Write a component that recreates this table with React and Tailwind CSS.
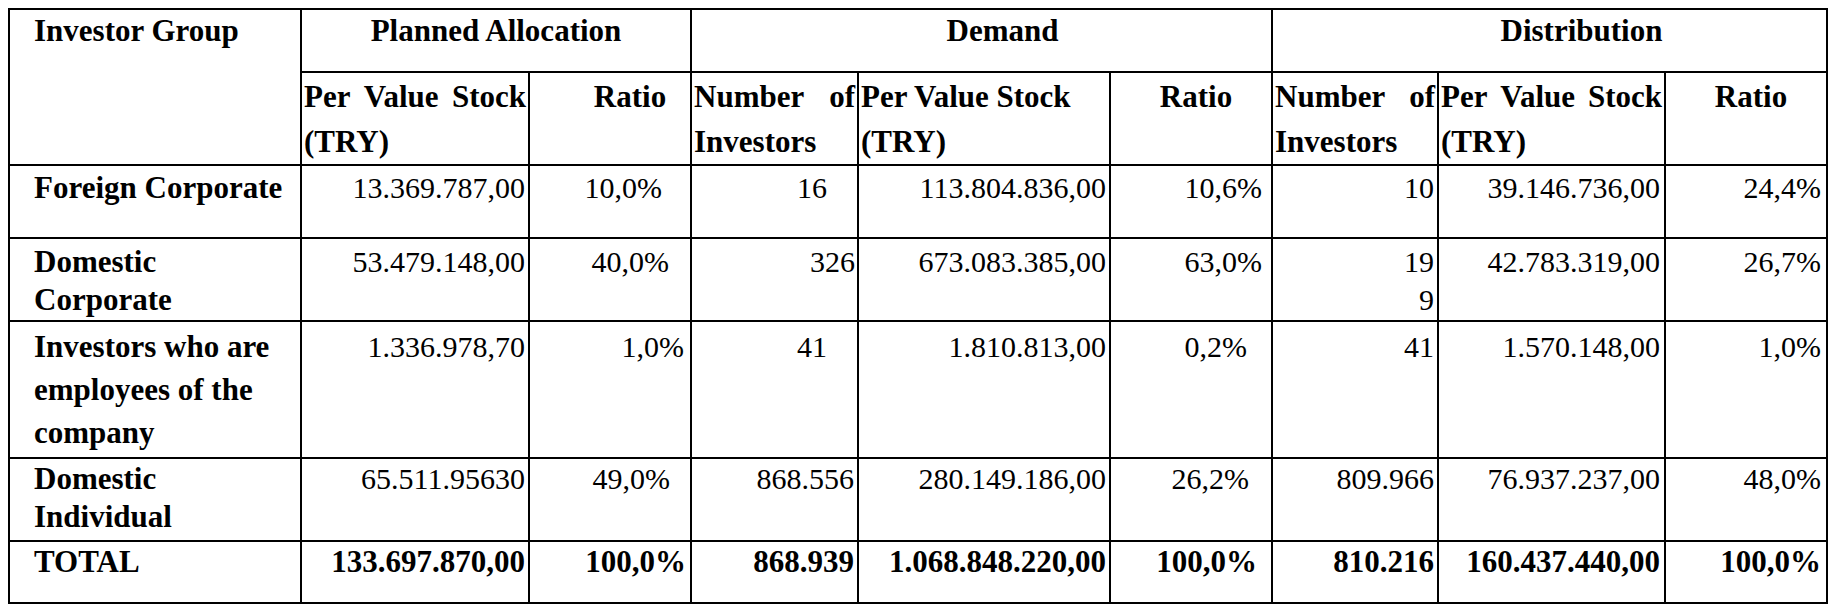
import React from "react";

const rows = [
  {
    h: "h-[73px]",
    lh: "leading-[38px] pt-[3px]",
    label: ["Foreign Corporate"],
    cells: [
      ["13.369.787,00", "pr-[3px]"],
      ["10,0%", "pr-[28px]"],
      ["16", "pr-[30px]"],
      ["113.804.836,00", "pr-[3px]"],
      ["10,6%", "pr-[9px]"],
      ["10", "pr-[3px]"],
      ["39.146.736,00", "pr-[4px]"],
      ["24,4%", "pr-[5px]"],
    ],
  },
  {
    h: "h-[83px]",
    lh: "leading-[38px] pt-[4px]",
    label: ["Domestic", "Corporate"],
    cells: [
      ["53.479.148,00", "pr-[3px]"],
      ["40,0%", "pr-[21px]"],
      ["326", "pr-[2px]"],
      ["673.083.385,00", "pr-[3px]"],
      ["63,0%", "pr-[9px]"],
      [["19", "9"], "pr-[3px]"],
      ["42.783.319,00", "pr-[4px]"],
      ["26,7%", "pr-[5px]"],
    ],
  },
  {
    h: "h-[137px]",
    lh: "leading-[43px] pt-[3px]",
    label: ["Investors who are", "employees of the", "company"],
    cells: [
      ["1.336.978,70", "pr-[3px]"],
      ["1,0%", "pr-[6px]"],
      ["41", "pr-[30px]"],
      ["1.810.813,00", "pr-[3px]"],
      ["0,2%", "pr-[24px]"],
      ["41", "pr-[3px]"],
      ["1.570.148,00", "pr-[4px]"],
      ["1,0%", "pr-[5px]"],
    ],
  },
  {
    h: "h-[83px]",
    lh: "leading-[38px] pt-[1px]",
    label: ["Domestic", "Individual"],
    cells: [
      ["65.511.95630", "pr-[3px]"],
      ["49,0%", "pr-[20px]"],
      ["868.556", "pr-[3px]"],
      ["280.149.186,00", "pr-[3px]"],
      ["26,2%", "pr-[22px]"],
      ["809.966", "pr-[3px]"],
      ["76.937.237,00", "pr-[4px]"],
      ["48,0%", "pr-[5px]"],
    ],
  },
];

const total = {
  h: "h-[62px]",
  lh: "leading-[38px] pt-[1px]",
  label: ["TOTAL"],
  cells: [
    ["133.697.870,00", "pr-[3px]"],
    ["100,0%", "pr-[4px]"],
    ["868.939", "pr-[3px]"],
    ["1.068.848.220,00", "pr-[3px]"],
    ["100,0%", "pr-[14px]"],
    ["810.216", "pr-[3px]"],
    ["160.437.440,00", "pr-[4px]"],
    ["100,0%", "pr-[5px]"],
  ],
};

function Lines({ lines }) {
  const arr = Array.isArray(lines) ? lines : [lines];
  return arr.map((l, i) => (
    <div key={i} className="whitespace-nowrap">
      {l}
    </div>
  ));
}

function Justified({ words }) {
  return (
    <div className="flex justify-between whitespace-nowrap">
      {words.map((w, i) => (
        <span key={i}>{w}</span>
      ))}
    </div>
  );
}

function BodyRow({ row, bold }) {
  return (
    <tr className={row.h}>
      <td
        className={`border-2 border-black align-top pl-[24px] pr-[10px] font-bold text-[31px] ${row.lh}`}
      >
        <Lines lines={row.label} />
      </td>
      {row.cells.map(([v, pr], i) => (
        <td
          key={i}
          className={`border-2 border-black align-top text-right pl-[2px] ${pr} ${row.lh} ${
            bold ? "font-bold text-[31px]" : "font-normal text-[30px]"
          }`}
        >
          <Lines lines={v} />
        </td>
      ))}
    </tr>
  );
}

const th = "border-2 border-black align-top font-bold text-[31px]";

export default function App() {
  return (
    <div className="w-[1836px] h-[616px] bg-white pt-[8px] pl-[8px] [font-family:'Liberation_Serif',serif] text-black text-[30px] leading-[41px]">
      <table className="border-collapse table-fixed w-[1820px] [font-family:'Liberation_Serif',serif]">
        <colgroup>
          <col className="w-[292px]" />
          <col className="w-[228px]" />
          <col className="w-[162px]" />
          <col className="w-[167px]" />
          <col className="w-[252px]" />
          <col className="w-[162px]" />
          <col className="w-[166px]" />
          <col className="w-[227px]" />
          <col className="w-[162px]" />
        </colgroup>
        <thead>
          <tr className="h-[63px] leading-[41px]">
            <th rowSpan={2} className={`${th} text-left pl-[24px] pt-0`}>
              Investor Group
            </th>
            <th colSpan={2} className={`${th} text-center pt-0`}>
              Planned Allocation
            </th>
            <th colSpan={3} className={`${th} text-center pt-0 pl-[42px]`}>
              Demand
            </th>
            <th colSpan={3} className={`${th} text-center pt-0 pl-[64px]`}>
              Distribution
            </th>
          </tr>
          <tr className="h-[90px] leading-[45px]">
            <th className={`${th} text-left px-[2px] pt-[1px]`}>
              <Justified words={["Per", "Value", "Stock"]} />
              <div>(TRY)</div>
            </th>
            <th className={`${th} text-center pt-[1px] pl-[40px]`}>Ratio</th>
            <th className={`${th} text-left px-[2px] pt-[1px]`}>
              <Justified words={["Number", "of"]} />
              <div>Investors</div>
            </th>
            <th className={`${th} text-left px-[2px] pt-[1px]`}>
              <div className="whitespace-nowrap">Per Value Stock</div>
              <div>(TRY)</div>
            </th>
            <th className={`${th} text-center pt-[1px] pl-[10px]`}>Ratio</th>
            <th className={`${th} text-left px-[2px] pt-[1px]`}>
              <Justified words={["Number", "of"]} />
              <div>Investors</div>
            </th>
            <th className={`${th} text-left px-[2px] pt-[1px]`}>
              <Justified words={["Per", "Value", "Stock"]} />
              <div>(TRY)</div>
            </th>
            <th className={`${th} text-center pt-[1px] pl-[10px]`}>Ratio</th>
          </tr>
        </thead>
        <tbody>
          {rows.map((r, i) => (
            <BodyRow key={i} row={r} />
          ))}
          <BodyRow row={total} bold />
        </tbody>
      </table>
    </div>
  );
}
